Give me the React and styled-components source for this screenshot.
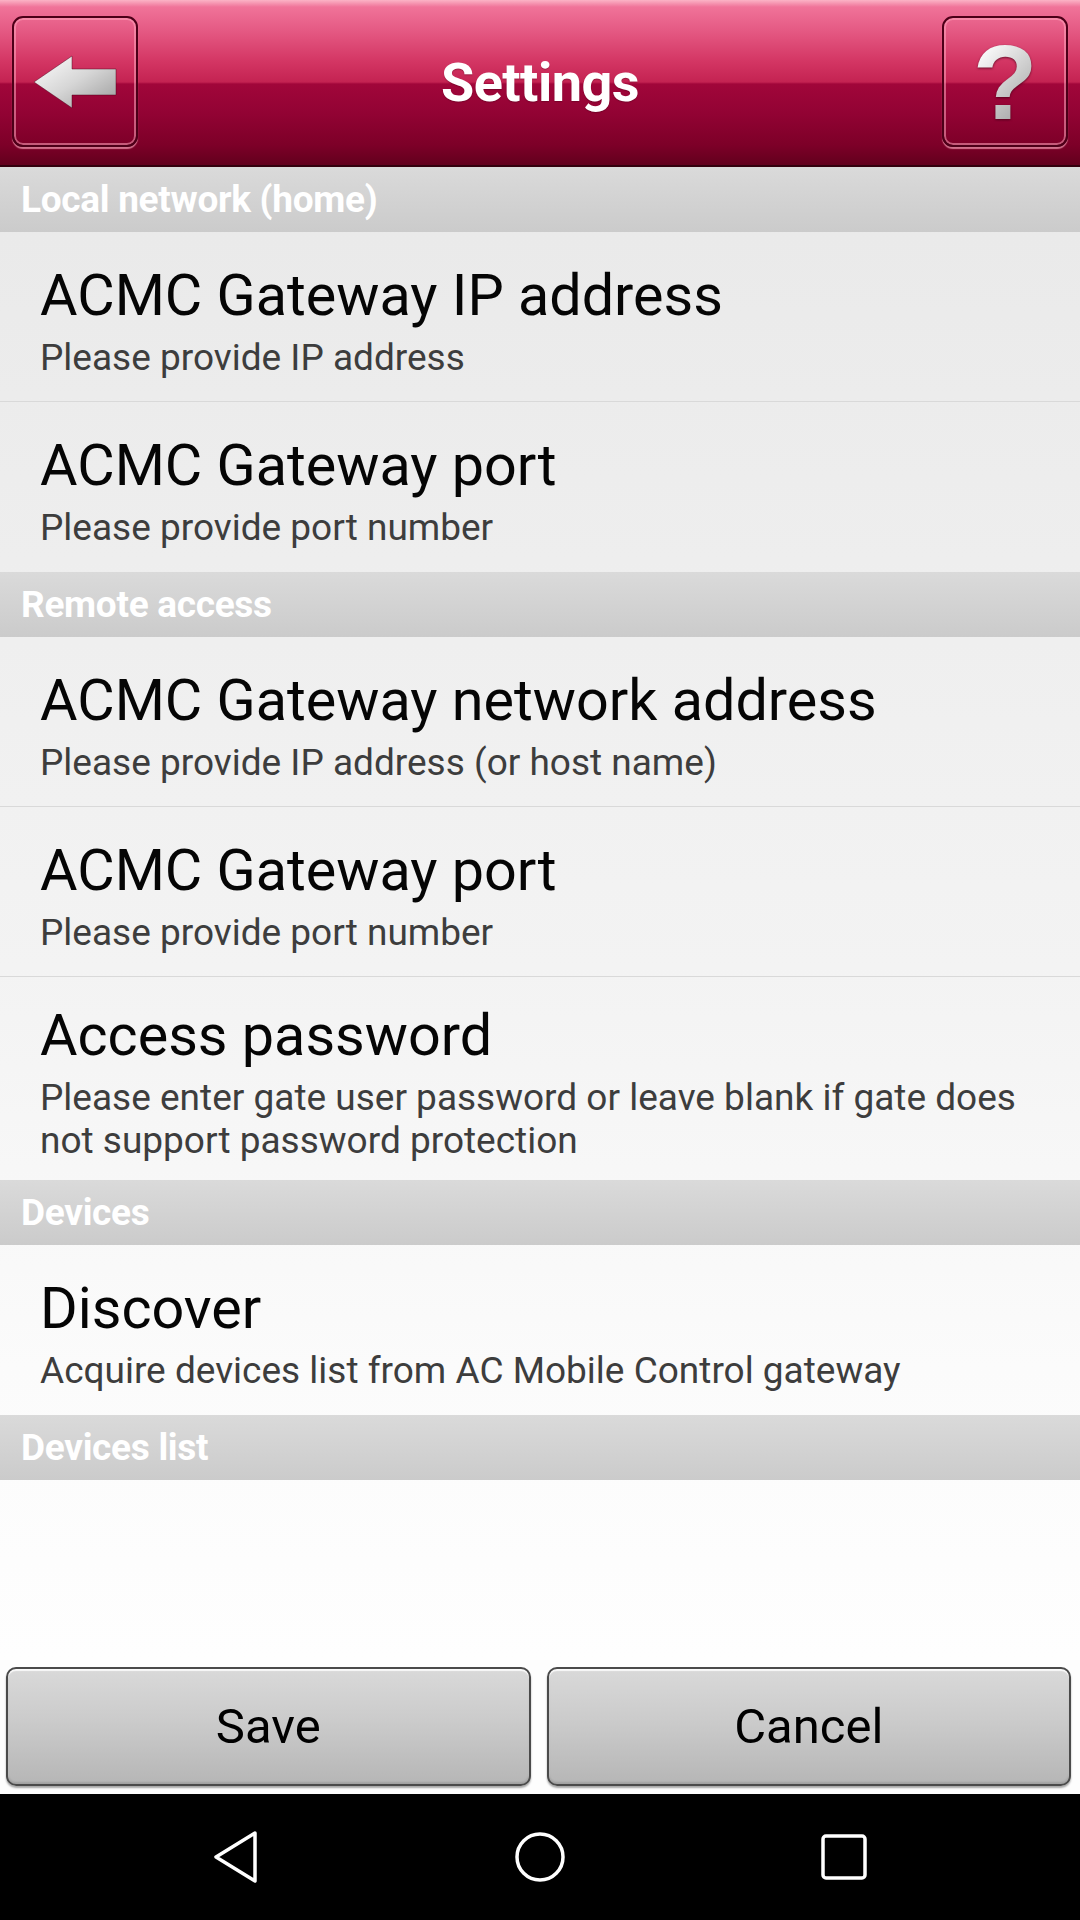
import React from 'react';
import styled, { createGlobalStyle } from 'styled-components';

const Global = createGlobalStyle`
  html, body { margin: 0; padding: 0; }
  body { font-family: Roboto, "Noto Sans", sans-serif; background: #000; }
  * { box-sizing: border-box; }
`;

const Screen = styled.div`
  width: 1080px;
  height: 1920px;
  display: flex;
  flex-direction: column;
  overflow: hidden;
`;

const Header = styled.header`
  flex: none;
  height: 167px;
  display: flex;
  align-items: center;
  padding: 0 12px;
  border-bottom: 2px solid #33000e;
  background: linear-gradient(
    to bottom,
    #fbb3c6 0px,
    #f07399 7px,
    #e55a84 30px,
    #d33563 62px,
    #c42352 82px,
    #a1063a 84px,
    #930334 112px,
    #7d0028 145px,
    #62001d 165px
  );
`;

const HeaderButton = styled.button`
  flex: none;
  width: 126px;
  height: 131px;
  margin-top: -2px;
  padding: 0;
  border-radius: 11px;
  border: 2px solid #4c0018;
  background: transparent;
  box-shadow: inset 0 0 0 2px rgba(255, 165, 190, 0.55), 0 2px 1px rgba(255, 175, 195, 0.65);
  display: flex;
  align-items: center;
  justify-content: center;
`;

const HelpGlyph = styled.span`
  font-family: "Liberation Sans", Arial, sans-serif;
  font-weight: 700;
  font-size: 106px;
  line-height: 1;
  background: linear-gradient(135deg, #ffffff 15%, #c9c9c9 55%, #8e8e8e 100%);
  -webkit-background-clip: text;
  background-clip: text;
  color: transparent;
  filter: drop-shadow(0 1px 1px rgba(60, 0, 20, 0.7));
`;

const Title = styled.h1`
  flex: 1;
  margin: 0;
  text-align: center;
  color: #fff;
  font-family: Roboto, sans-serif;
  font-weight: 700;
  font-size: 54px;
  letter-spacing: -0.5px;
  text-shadow: 0 1px 1px rgba(60, 0, 20, 0.35);
`;

const Content = styled.main`
  flex: 1;
  display: flex;
  flex-direction: column;
  background: linear-gradient(to bottom, #d8d8d8 0px, #eaeaea 66px, #f3f3f3 800px, #fbfbfb 1200px, #fefefe 1493px);
`;

const SectionHeader = styled.div`
  height: 65px;
  padding-left: 21px;
  display: flex;
  align-items: center;
  background: linear-gradient(to bottom, #dadada, #cbcbcb);
  color: #fff;
  font-weight: 700;
  font-size: 37px;
  line-height: 65px;
  letter-spacing: -0.3px;
`;

const Row = styled.div`
  min-height: 170px;
  padding: 18px 40px 18px 40px;
  display: flex;
  flex-direction: column;
  justify-content: center;
  &:not(:last-child) {
    border-bottom: 1px solid #d9d9d9;
  }
`;

const RowTitle = styled.div`
  color: #050505;
  font-size: 57.5px;
  line-height: 81px;
  font-weight: 400;
`;

const RowSub = styled.div`
  color: #3d3d3d;
  font-size: 37px;
  line-height: 43px;
`;

const ButtonBar = styled.div`
  flex: none;
  display: grid;
  grid-template-columns: 1fr 1fr;
  gap: 16px;
  padding: 7px 9px 8px 6px;
  background: #fdfdfd;
`;

const ActionButton = styled.button`
  height: 119px;
  border-radius: 10px;
  border: 2px solid #4a4a4a;
  background: linear-gradient(to bottom, #d9d9d9 0%, #cbcbcb 45%, #b6b6b6 100%);
  box-shadow: inset 0 2px 1px rgba(255, 255, 255, 0.85), inset 0 -2px 2px rgba(0, 0, 0, 0.12), 0 2px 2px rgba(0, 0, 0, 0.35);
  font-family: Roboto, sans-serif;
  font-size: 49px;
  color: #000;
`;

const NavBar = styled.nav`
  flex: none;
  height: 126px;
  background: #000;
  display: grid;
  grid-template-columns: repeat(3, 304px);
  justify-content: center;
  align-items: center;
  justify-items: center;
`;

const sections = [
  {
    title: 'Local network (home)',
    items: [
      { t: 'ACMC Gateway IP address', s: 'Please provide IP address' },
      { t: 'ACMC Gateway port', s: 'Please provide port number' },
    ],
  },
  {
    title: 'Remote access',
    items: [
      { t: 'ACMC Gateway network address', s: 'Please provide IP address (or host name)' },
      { t: 'ACMC Gateway port', s: 'Please provide port number' },
      {
        t: 'Access password',
        s: 'Please enter gate user password or leave blank if gate does not support password protection',
      },
    ],
  },
  {
    title: 'Devices',
    items: [{ t: 'Discover', s: 'Acquire devices list from AC Mobile Control gateway' }],
  },
  { title: 'Devices list', items: [] },
];

const BackArrow = () => (
  <svg width="84" height="54" viewBox="-1 -1 84 54">
    <defs>
      <linearGradient id="silver" x1="0" y1="0" x2="1" y2="1">
        <stop offset="0" stopColor="#ffffff" />
        <stop offset="0.5" stopColor="#d6d6d6" />
        <stop offset="1" stopColor="#9a9a9a" />
      </linearGradient>
    </defs>
    <path
      d="M0 26 L38 0 L38 13 L82 13 L82 39 L38 39 L38 52 Z"
      fill="url(#silver)"
      stroke="rgba(70,0,25,0.45)"
      strokeWidth="1"
      strokeLinejoin="round"
    />
  </svg>
);

export default function App() {
  return (
    <Screen>
      <Global />
      <Header>
        <HeaderButton aria-label="Back">
          <BackArrow />
        </HeaderButton>
        <Title>Settings</Title>
        <HeaderButton aria-label="Help">
          <HelpGlyph>?</HelpGlyph>
        </HeaderButton>
      </Header>
      <Content>
        {sections.map((sec) => (
          <React.Fragment key={sec.title}>
            <SectionHeader>{sec.title}</SectionHeader>
            {sec.items.length > 0 && (
              <div>
                {sec.items.map((it, i) => (
                  <Row key={i}>
                    <RowTitle>{it.t}</RowTitle>
                    <RowSub>{it.s}</RowSub>
                  </Row>
                ))}
              </div>
            )}
          </React.Fragment>
        ))}
      </Content>
      <ButtonBar>
        <ActionButton>Save</ActionButton>
        <ActionButton>Cancel</ActionButton>
      </ButtonBar>
      <NavBar>
        <svg width="48" height="54" viewBox="0 0 48 54">
          <path d="M43 3 L4 27 L43 51 Z" fill="none" stroke="#fff" strokeWidth="3.5" strokeLinejoin="round" />
        </svg>
        <svg width="54" height="54" viewBox="0 0 54 54">
          <circle cx="27" cy="27" r="23" fill="none" stroke="#fff" strokeWidth="3.5" />
        </svg>
        <svg width="48" height="48" viewBox="0 0 48 48">
          <rect x="3" y="3" width="42" height="42" rx="3" fill="none" stroke="#fff" strokeWidth="3.5" />
        </svg>
      </NavBar>
    </Screen>
  );
}
